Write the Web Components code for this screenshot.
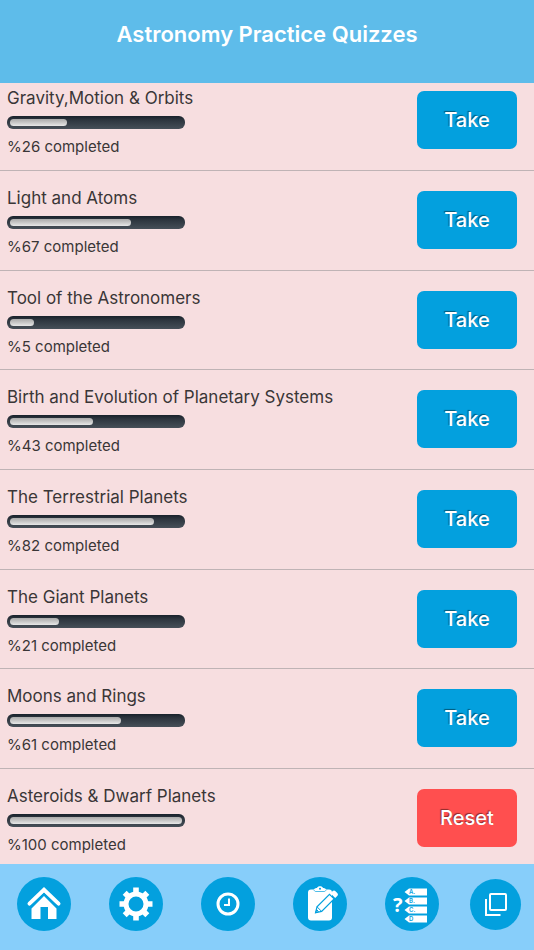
<!DOCTYPE html>
<html lang="en">
<head>
<meta charset="utf-8">
<meta name="viewport" content="width=device-width, initial-scale=1">
<title>Astronomy Practice Quizzes</title>
<style>
  html, body { margin: 0; }
  body { font-family: Inter, "Liberation Sans", sans-serif; color: #3a3637; background: #f7dee0; }
</style>
</head>
<body>
<quiz-app></quiz-app>

<template id="app-header">
  <style>
    :host { display: block; background: #5ebcea; color: #fff; padding: 20px 16px 35px; text-align: center; }
    h1 { margin: 0; font-size: 22px; line-height: 28px; font-weight: 600; }
  </style>
  <h1><slot></slot></h1>
</template>

<template id="quiz-progress">
  <style>
    :host { display: block; }
    .track { box-sizing: border-box; height: 13px; padding: 3px; border-radius: 6px; background: linear-gradient(#18212b, #2d353e 30%, #464f58); }
    .fill { box-sizing: border-box; height: 7px; min-width: 16px; border-radius: 4px; background: linear-gradient(#aaa, #c4c4c4 45%, #e8e8e8); }
  </style>
  <div class="track" role="progressbar" aria-valuemin="0" aria-valuemax="100"><div class="fill"></div></div>
</template>

<template id="quiz-row">
  <style>
    :host { display: flex; box-sizing: border-box; align-items: flex-start; justify-content: space-between; padding: 16px 17px 0 7px; border-bottom: 1px solid #bfb3b5; }
    :host(:first-of-type) { padding-top: 4px; }
    :host(:last-of-type) { border-bottom: 0; }
    .info { display: grid; grid-template-columns: 178px 1fr; white-space: nowrap; }
    h2, p { margin: 0; grid-column: 1 / -1; line-height: 22px; font-weight: 400; }
    h2 { font-size: 17px; }
    p { font-size: 15px; }
    quiz-progress { margin: 7px 0; }
    button { flex: none; width: 100px; height: 58px; margin-top: 4px; padding: 0; border: 0; border-radius: 7px; background: #03a0de; color: #fff; font: 500 20px/26px Inter, "Liberation Sans", sans-serif; text-shadow: -1px -1px 1px rgba(0, 0, 0, .45); cursor: pointer; }
    button.reset { background: #ff4f4f; }
  </style>
  <div class="info">
    <h2><slot></slot></h2>
    <quiz-progress></quiz-progress>
    <p></p>
  </div>
  <button type="button"></button>
</template>

<template id="nav-item">
  <style>
    :host { display: block; width: 54px; }
    :host([small]) { width: 51px; }
    button { display: block; width: 100%; aspect-ratio: 1; padding: 0; border: 0; border-radius: 50%; background: #03a0de; color: #fff; cursor: pointer; overflow: hidden; }
    ::slotted(svg) { display: block; width: 100%; height: 100%; }
  </style>
  <button type="button"><slot></slot></button>
</template>

<template id="quiz-app">
  <style>
    :host { display: flex; flex-direction: column; min-height: 100vh; }
    main { flex: 1; display: grid; grid-template-rows: 88px repeat(6, minmax(96px, 1fr)) 95px; }
    nav { display: grid; grid-template-columns: 92fr 92fr 92fr 92fr 85fr 51px; align-items: center; padding: 13px 13px 19px 17px; background: #87cefa; }
  </style>
  <app-header>Astronomy Practice Quizzes</app-header>
  <main>
    <quiz-row value="26">Gravity,Motion &amp; Orbits</quiz-row>
    <quiz-row value="67">Light and Atoms</quiz-row>
    <quiz-row value="5">Tool of the Astronomers</quiz-row>
    <quiz-row value="43">Birth and Evolution of Planetary Systems</quiz-row>
    <quiz-row value="82">The Terrestrial Planets</quiz-row>
    <quiz-row value="21">The Giant Planets</quiz-row>
    <quiz-row value="61">Moons and Rings</quiz-row>
    <quiz-row value="100">Asteroids &amp; Dwarf Planets</quiz-row>
  </main>
  <nav aria-label="Main">
    <nav-item label="Home">
      <svg viewBox="0 0 54 54" fill="none" aria-hidden="true">
        <path d="M14.5 31.5 27 19l12.500 12.500V42H31V30h-7.500v12h-9z" fill="#fff"/>
        <path d="M12.500 26.700 27 12.700l14.500 14" stroke="#fff" stroke-width="4" stroke-linecap="round"/>
        <path d="M13 29.800 27 16.500l14 13.300" stroke="#03a0de" stroke-width="1.200"/>
      </svg>
    </nav-item>
    <nav-item label="Settings">
      <svg viewBox="0 0 54 54" fill="none" aria-hidden="true">
        <circle cx="27" cy="27" r="10" stroke="#fff" stroke-width="5"/>
        <g fill="#fff">
          <path d="M24.200 10.500h5.600v6h-5.600zM24.200 37.500h5.600v6h-5.600zM10.500 24.200h6v5.600h-6zM37.500 24.200h6v5.600h-6z"/>
          <path d="M24.200 11h5.600v6h-5.600zM24.200 37h5.600v6h-5.600zM11 24.200h6v5.600h-6zM37 24.200h6v5.600h-6z" transform="rotate(45 27 27)"/>
        </g>
      </svg>
    </nav-item>
    <nav-item label="History">
      <svg viewBox="0 0 54 54" fill="none" stroke="#fff" aria-hidden="true">
        <circle cx="27" cy="27" r="10" stroke-width="3"/>
        <path d="M28 21.500v6.500h-5" stroke-width="2"/>
      </svg>
    </nav-item>
    <nav-item label="Notes">
      <svg viewBox="0 0 54 54" fill="none" aria-hidden="true">
        <path d="M18 12.500h3c.5-1 1.500-1.500 3-1.500.5-2.500 5.500-2.500 6 0 1.500 0 2.500.5 3 1.500h3c2 0 3 1 3 3v25c0 2-1 3-3 3H18c-2 0-3-1-3-3v-25c0-2 1-3 3-3z" fill="#fff"/>
        <path d="M21 13c.5 1.200 1 1.500 2 1.500h8c1 0 1.500-.3 2-1.500" stroke="#03a0de" stroke-width=".7"/>
        <circle cx="27" cy="11.800" r="1" fill="#03a0de"/>
        <path d="m22.500 35.800 1.500-6L36.500 17.300l4.600 4.600L28.600 34.400z" fill="#fff" stroke="#03a0de" stroke-width="1.200"/>
        <path d="m24 29.800 4.600 4.600M22.500 35.800l1.300-3 1.700 1.700z" stroke="#03a0de"/>
        <path d="m37.500 16.300 2-2c1-1 2-1 3 0l1.700 1.700c1 1 1 2 0 3l-2 2z" fill="#fff"/>
      </svg>
    </nav-item>
    <nav-item label="Questions">
      <svg viewBox="0 0 54 54" aria-hidden="true">
        <path d="M24 11.500h18v7H24L19.500 15zM24 20.500h18v7H24L19.500 24zM24 29.500h18v7H24L19.500 33zM24 38.500h18v7H24L19.500 42z" fill="#fff"/>
        <g font-family="Inter, sans-serif" font-weight="600" font-size="6" fill="#03a0de">
          <text x="24" y="17">A.</text><text x="24" y="26">B.</text><text x="24" y="35">C.</text><text x="24" y="44">D</text>
        </g>
        <text x="8" y="35" font-family="Open Sans, sans-serif" font-weight="700" font-size="20" fill="#fff">?</text>
      </svg>
    </nav-item>
    <nav-item label="Windows" small>
      <svg viewBox="0 0 51 51" fill="none" stroke="#fff" stroke-width="2" aria-hidden="true">
        <rect x="20" y="15" width="16" height="16" rx="1"/>
        <path d="M16 20v16h14.500"/>
      </svg>
    </nav-item>
  </nav>
</template>

<script>
  class TemplateElement extends HTMLElement {
    constructor() {
      super();
      const template = document.getElementById(this.localName);
      this.attachShadow({ mode: "open" }).append(document.importNode(template.content, true));
    }
  }

  class AppHeader extends TemplateElement {}

  class QuizProgress extends TemplateElement {
    static observedAttributes = ["value"];
    attributeChangedCallback(name, previous, value) {
      this.shadowRoot.querySelector(".fill").style.width = `calc(16px + (100% - 16px) * ${Number(value) / 100})`;
      this.shadowRoot.querySelector(".track").setAttribute("aria-valuenow", value);
    }
  }

  class QuizRow extends TemplateElement {
    connectedCallback() {
      const value = this.getAttribute("value");
      const done = value === "100";
      const bar = this.shadowRoot.querySelector("quiz-progress");
      const button = this.shadowRoot.querySelector("button");
      bar.setAttribute("value", value);
      bar.shadowRoot.querySelector(".track").setAttribute("aria-label", this.textContent);
      this.shadowRoot.querySelector("p").textContent = `%${value} completed`;
      button.textContent = done ? "Reset" : "Take";
      button.classList.toggle("reset", done);
    }
  }

  class NavItem extends TemplateElement {
    connectedCallback() {
      this.shadowRoot.querySelector("button").setAttribute("aria-label", this.getAttribute("label"));
    }
  }

  class QuizApp extends TemplateElement {}

  customElements.define("app-header", AppHeader);
  customElements.define("quiz-progress", QuizProgress);
  customElements.define("quiz-row", QuizRow);
  customElements.define("nav-item", NavItem);
  customElements.define("quiz-app", QuizApp);
</script>
</body>
</html>
